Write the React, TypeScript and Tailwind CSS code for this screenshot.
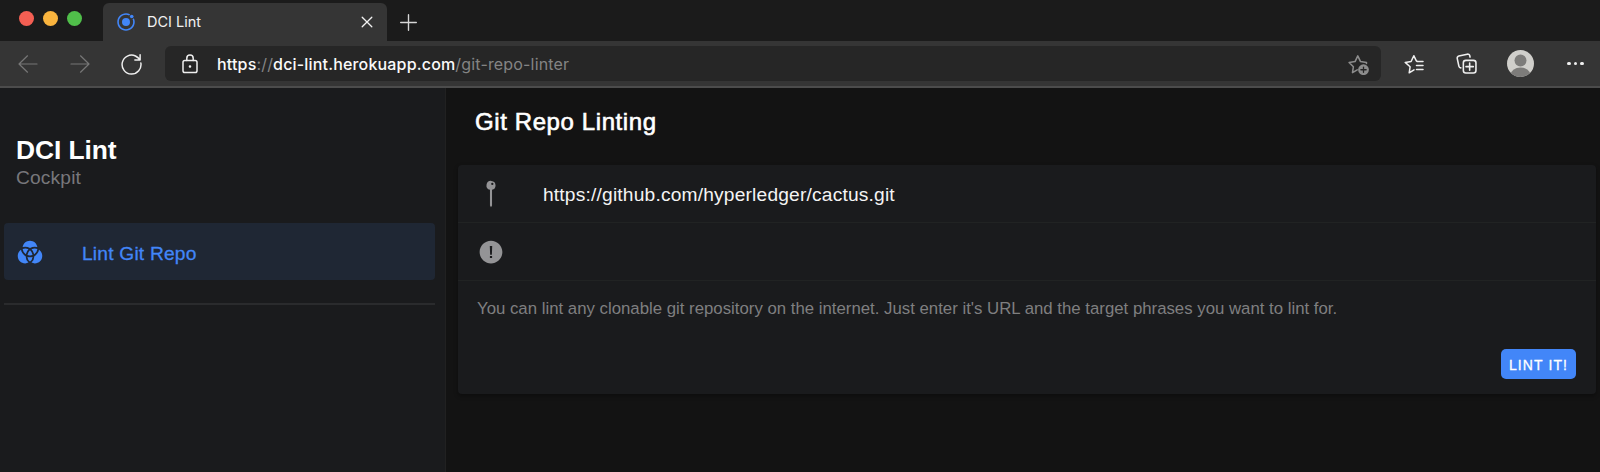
import type { ReactNode } from "react";
import { IoAlertCircleSharp, IoColorFilterSharp, IoLogoIonic, IoPinSharp } from "react-icons/io5";

function StrokeIcon({ size, className, children }: { size: number; className?: string; children: ReactNode }) {
    return (
        <svg
            width={size}
            height={size}
            viewBox="0 0 20 20"
            fill="none"
            stroke="currentColor"
            strokeWidth="1.2"
            strokeLinecap="round"
            strokeLinejoin="round"
            className={`shrink-0 ${className ?? ""}`}
        >
            {children}
        </svg>
    );
}

function TabStrip() {
    return (
        <div className="flex h-[41px] bg-[#1b1b1b]">
            <div className="flex w-[103px] gap-[9px] pt-[11px] pl-[19px]">
                <span className="size-[15px] rounded-full bg-[#f45f53]" />
                <span className="size-[15px] rounded-full bg-[#f9b43e]" />
                <span className="size-[15px] rounded-full bg-[#50bf4a]" />
            </div>
            <div className="mt-[3px] flex w-[284px] items-center rounded-t-md bg-[#353535] pr-[14px] pl-[13px]">
                <IoLogoIonic className="size-5 text-[#4286f8]" />
                <span className="ml-[11px] flex-1 font-['Inter',sans-serif] text-[14.5px] text-[#f1f1f1]">DCI Lint</span>
                <StrokeIcon size={12} className="text-[#f1f1f1]">
                    <path strokeWidth="2.2" d="M2 2l16 16M18 2L2 18" />
                </StrokeIcon>
            </div>
            <StrokeIcon size={17} className="mt-[14px] ml-[13px] text-[#d6d6d6]">
                <path strokeWidth="1.6" d="M10 .8v18.4M.8 10h18.4" />
            </StrokeIcon>
        </div>
    );
}

function Toolbar() {
    return (
        <div className="flex h-[47px] items-center border-b-2 border-[#4c4c4c] bg-[#353535] text-[#efefef]">
            <StrokeIcon size={20} className="ml-[18px] text-[#777]">
                <path d="M19 10H1M9.5 1.8L1 10l8.5 8.2" />
            </StrokeIcon>
            <StrokeIcon size={20} className="ml-8 text-[#777]">
                <path d="M1 10h18M10.5 1.8L19 10l-8.5 8.2" />
            </StrokeIcon>
            <StrokeIcon size={21} className="mt-px ml-[31px]">
                <path strokeWidth="1.4" d="M18.9 8.5A9 9 0 1 1 13.800 1.900Q16 3 18 5.300M18.200 .8v4.900h-5" />
            </StrokeIcon>
            <div className="ml-[23px] flex h-[35px] w-[1216px] items-center rounded-md bg-[#262626] pr-3 pl-[15px]">
                <StrokeIcon size={20}>
                    <rect x="3" y="6.5" width="14" height="12" rx="1.8" strokeWidth="1.5" />
                    <path strokeWidth="1.5" d="M6.8 6.5V4.3a3.2 3.2 0 0 1 6.4 0v2.2" />
                    <circle cx="10" cy="12.5" r=".7" fill="currentColor" />
                </StrokeIcon>
                <span className="ml-[17px] flex-1 font-['Inter',sans-serif] text-[16px] tracking-[0.17px] text-[#848484]">
                    <span className="font-medium text-[#fafafa]">https</span>://
                    <span className="font-medium text-[#fafafa]">dci-lint.herokuapp.com</span>/git-repo-linter
                </span>
                <StrokeIcon size={22} className="text-[#8c8c8c]">
                    <path strokeWidth="1.4" d="M9.3 15.300l-4.300 2.500.8-5.300-3.900-3.900 5.400-.8L9.800 2.600l2.500 5.200 5.400.8v1" />
                    <circle cx="15" cy="15.2" r="4.9" fill="currentColor" stroke="none" />
                    <path className="stroke-[#262626]" d="M15 12.8v4.8M12.6 15.2h4.8" />
                </StrokeIcon>
            </div>
            <StrokeIcon size={20} className="ml-[23px]">
                <path strokeWidth="1.5" d="M10 15.900l-4.800 2.900.9-6-4.900-4.400 5.900-.9L9.800 1.700l2.400 4.900.8.800M13 7.400H19M12.500 11.400H19M12.500 15.400H19" />
            </StrokeIcon>
            <StrokeIcon size={21} className="ml-[32px]">
                <rect x="7" y="7" width="12" height="12" rx="2.4" strokeWidth="1.5" />
                <path strokeWidth="1.5" d="M13 9.5v7M9.5 13h7M4.6 14.2a2 2 0 0 1-1.8-1.5L1.2 5.3a2 2 0 0 1 1.5-2.4l8-1.8a2 2 0 0 1 2.4 1.5l.3 1.3" />
            </StrokeIcon>
            <svg width="27" height="27" viewBox="0 0 27 27" className="ml-[30px] shrink-0">
                <defs>
                    <clipPath id="avatar">
                        <circle cx="13.5" cy="13.5" r="13.5" />
                    </clipPath>
                </defs>
                <g clipPath="url(#avatar)">
                    <rect width="27" height="27" fill="#d0cfcb" />
                    <circle cx="13.5" cy="10.5" r="6" fill="#7d7c7a" />
                    <ellipse cx="13.5" cy="25" rx="10" ry="7.5" fill="#7d7c7a" />
                </g>
            </svg>
            <div className="ml-[33px] flex gap-[3px]">
                <span className="size-[3.5px] rounded-full bg-[#efefef]" />
                <span className="size-[3.5px] rounded-full bg-[#efefef]" />
                <span className="size-[3.5px] rounded-full bg-[#efefef]" />
            </div>
        </div>
    );
}

function Sidebar() {
    return (
        <aside className="w-[446px] border-r border-[#212121] bg-[#1a1b1d] pt-[46px] pr-[10px] pl-1">
            <h1 className="pl-3 text-[26.4px] leading-8 font-bold tracking-[-0.1px] text-white">DCI Lint</h1>
            <p className="pl-3 text-[19.2px] leading-6 tracking-[0.15px] text-[#77777b]">Cockpit</p>
            <a className="mt-[33px] flex h-[57px] items-center rounded-[4px] bg-[#1f2734] pl-3 text-[#4286f8]">
                <IoColorFilterSharp className="size-7" />
                <span className="ml-[38px] pt-[5px] text-[19.2px] tracking-[0.2px] [-webkit-text-stroke:0.3px]">Lint Git Repo</span>
            </a>
            <div className="mt-[23px] border-t-2 border-[#2a2b2d]" />
        </aside>
    );
}

function LintPage() {
    return (
        <main className="flex-1 bg-[#131313]">
            <header className="flex h-[67px] items-center pl-[29px] text-[24px] tracking-[0.6px] text-white [-webkit-text-stroke:0.6px]">
                Git Repo Linting
            </header>
            <section className="mt-[10px] mr-1 ml-3 h-[229px] rounded-[4px] bg-[#1a1b1d] shadow-[0_2px_4px_rgba(0,0,0,0.35)]">
                <div className="flex h-[58px] items-center border-b border-[#212323] pl-[19px]">
                    <IoPinSharp className="size-7 text-[#949496]" />
                    <span className="ml-[38px] pt-[3px] text-[19.2px] tracking-[0.18px] text-[#f4f4f4]">
                        https://github.com/hyperledger/cactus.git
                    </span>
                </div>
                <div className="flex h-[58px] items-center border-b border-[#212323] pl-[19px]">
                    <IoAlertCircleSharp className="size-7 text-[#949496]" />
                </div>
                <p className="pt-4 pl-[19px] text-[16.8px] leading-6 text-[#7f7f80]">
                    You can lint any clonable git repository on the internet. Just enter it's URL and the target phrases you want to lint for.
                </p>
                <div className="mt-[28px] flex justify-end pr-[20px]">
                    <button className="h-[30px] w-[75px] rounded-[5px] bg-[#4286f8] pt-0.5 text-[14px] tracking-[1.1px] text-white [-webkit-text-stroke:0.3px]">
                        LINT IT!
                    </button>
                </div>
            </section>
        </main>
    );
}

export default function App() {
    return (
        <div className="flex h-[472px] w-[1600px] flex-col overflow-hidden bg-[#131313] font-['Liberation_Sans',sans-serif]">
            <TabStrip />
            <Toolbar />
            <div className="flex flex-1">
                <Sidebar />
                <LintPage />
            </div>
        </div>
    );
}
